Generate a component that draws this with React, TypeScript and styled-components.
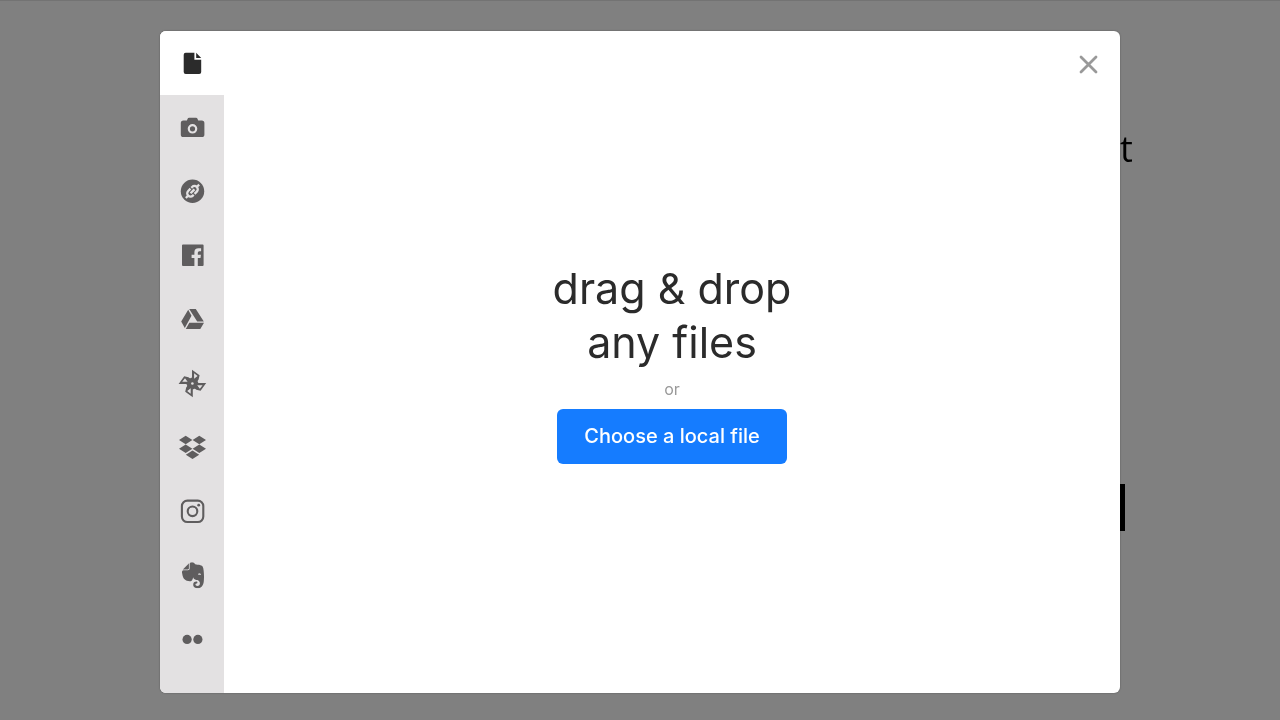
import React from "react";
import styled, { createGlobalStyle } from "styled-components";
import { SiEvernote } from "react-icons/si";

const GlobalStyle = createGlobalStyle`
  * { box-sizing: border-box; }
  html, body, #root { height: 100%; }
  body {
    margin: 0;
    background: #808080;
    color: #000;
    font-family: Inter, "Liberation Sans", sans-serif;
  }
`;

const Page = styled.div`
  position: relative;
  min-height: 100%;
  border-top: 1px solid #737373;
`;

const Backdrop = styled.div`
  display: flex;
  flex-direction: column;
  align-items: flex-end;
  gap: 311px;
  padding: 124px 147px 0 0;
`;

const BackdropText = styled.p`
  margin: 0;
  font: 400 36px/48px "Open Sans", sans-serif;
  will-change: transform;
`;

const BackdropBlock = styled.div`
  width: 48px;
  height: 47px;
  margin-right: 8px;
  background: #000;
`;

const Overlay = styled.div`
  position: fixed;
  inset: 0;
  display: flex;
  padding: 31px 160px 27px;
`;

const Dialog = styled.div`
  flex: 1;
  display: flex;
  position: relative;
  overflow: hidden;
  border-radius: 6px;
  background: #fff;
  box-shadow: 0 0 2px rgba(0, 0, 0, 0.35);
`;

const Sources = styled.nav`
  display: flex;
  flex-direction: column;
  width: 64px;
  background: #e3e1e2;
`;

const SourceButton = styled.button<{ $active?: boolean }>`
  display: flex;
  align-items: center;
  justify-content: center;
  height: 64px;
  padding: 0;
  border: 0;
  background: ${(p) => (p.$active ? "#fff" : "transparent")};
  color: ${(p) => (p.$active ? "#2b2b2b" : "#5f5d5e")};
  cursor: pointer;
`;

const Icon = styled.svg`
  width: 32px;
  height: 32px;
  fill: currentColor;
`;

const CloseButton = styled.button`
  position: absolute;
  top: 0;
  right: 0;
  display: flex;
  align-items: center;
  justify-content: center;
  width: 64px;
  height: 66px;
  padding: 0;
  border: 0;
  background: none;
  color: #999;
  cursor: pointer;
`;

const Panel = styled.main`
  flex: 1;
  display: flex;
  flex-direction: column;
  align-items: center;
  justify-content: center;
`;

const Title = styled.h1`
  margin: 0;
  color: #2b2b2b;
  font-size: 43px;
  font-weight: 400;
  line-height: 54px;
  text-align: center;
`;

const Or = styled.p`
  margin: 8px 0;
  color: #999;
  font-size: 16px;
  line-height: 24px;
`;

const ChooseButton = styled.button`
  height: 55px;
  padding: 0 27px;
  border: 0;
  border-radius: 6px;
  background: #157cff;
  color: #fff;
  font: 500 20px/28px Inter, "Liberation Sans", sans-serif;
  cursor: pointer;
`;

const LIGHT = "#e3e1e2";
const SOURCE_BOX = "-1 0 32 32";

const diamond = (x: number, y: number) =>
  `M${x - 6.7} ${y}L${x} ${y - 4.3}L${x + 6.7} ${y}L${x} ${y + 4.3}Z`;

const sources: { label: string; icon: React.ReactNode }[] = [
  {
    label: "Local files",
    icon: (
      <Icon viewBox={SOURCE_BOX}>
        <path d="M8.7 5.7H17.4V12.7H24.2V25Q24.2 27 22.2 27H8.7Q6.7 27 6.7 25V7.7Q6.7 5.7 8.7 5.7Z" />
        <path d="M19.2 5.7L24.2 11H19.2Z" />
      </Icon>
    ),
  },
  {
    label: "Camera",
    icon: (
      <Icon viewBox={SOURCE_BOX}>
        <path d="M12.3 6.8H18.8Q20.3 6.8 20.7 8.2L21.2 9.6H24.8Q27.4 9.6 27.4 12.2V23.4Q27.4 26 24.8 26H6.4Q3.8 26 3.8 23.4V12.2Q3.8 9.6 6.4 9.6H9.9L10.4 8.2Q10.8 6.8 12.3 6.8Z" />
        <circle cx="15.5" cy="17.8" r="3.7" fill="none" stroke={LIGHT} strokeWidth="2.2" />
      </Icon>
    ),
  },
  {
    label: "Direct link",
    icon: (
      <Icon viewBox={SOURCE_BOX}>
        <circle cx="15.5" cy="16.3" r="11.7" />
        <g transform="translate(15.5 16.3) rotate(-45)" fill="none" stroke={LIGHT} strokeWidth="2.3">
          <path d="M.4 -3.3H-2.8A3.3 3.3 0 0 0 -2.8 3.3H-1.6M-.4 3.3H2.8A3.3 3.3 0 0 0 2.8 -3.3H1.6" />
          <path d="M-9.4 0H-6M6 0H9.4M-2.8 0H2.8" />
        </g>
      </Icon>
    ),
  },
  {
    label: "Facebook",
    icon: (
      <Icon viewBox={SOURCE_BOX}>
        <path d="M6 5.6H25.6Q26.6 5.6 26.6 6.6V26Q26.6 27 25.6 27H20.8V18.9H23.5L23.9 15.7H20.8V13.7Q20.8 12.2 22.3 12.2H24.1V9.2H21.5Q17.4 9.2 17.4 13.2V15.7H14.6V18.9H17.4V27H6Q5 27 5 26V6.6Q5 5.6 6 5.6Z" />
      </Icon>
    ),
  },
  {
    label: "Google Drive",
    icon: (
      <Icon viewBox={SOURCE_BOX}>
        <path d="M11.2 6.8L14.5 12.8L7.8 25L4.2 18.6ZM12.2 6H18.8L26.8 18.6H20.2ZM12.3 19.8H27L23.3 26H8.8Z" />
      </Icon>
    ),
  },
  {
    label: "Google Photos",
    icon: (
      <Icon viewBox={SOURCE_BOX}>
        {[0, 90, 180, 270].map((angle) => (
          <path
            key={angle}
            transform={`translate(15.4 16.5) rotate(${angle})`}
            fillRule="evenodd"
            d="M-4.5 -4L-.4 -6V-13.8L7.2 -8.2L6.2 -4L2 2ZM1.7 -10.2V-4.8L5.2 -7.4Z"
          />
        ))}
        <circle cx="15.4" cy="16.5" r="1.3" fill={LIGHT} />
      </Icon>
    ),
  },
  {
    label: "Dropbox",
    icon: (
      <Icon viewBox={SOURCE_BOX}>
        <path
          d={[
            diamond(8.7, 9),
            diamond(22.3, 9),
            diamond(8.7, 17.7),
            diamond(22.3, 17.7),
            diamond(15.5, 23.8),
          ].join("")}
        />
      </Icon>
    ),
  },
  {
    label: "Instagram",
    icon: (
      <Icon viewBox={SOURCE_BOX}>
        <g fill="none" stroke="currentColor" strokeWidth="2.1">
          <rect x="4.9" y="5.6" width="21.4" height="21.4" rx="5.5" />
          <circle cx="15.5" cy="16.3" r="4.8" />
        </g>
        <circle cx="21.7" cy="10.2" r="1.4" />
      </Icon>
    ),
  },
  {
    label: "Evernote",
    icon: (
      <Icon viewBox={SOURCE_BOX}>
        <SiEvernote x="3" y="3.3" size={26} />
      </Icon>
    ),
  },
  {
    label: "Flickr",
    icon: (
      <Icon viewBox={SOURCE_BOX}>
        <circle cx="10.1" cy="16.4" r="4.6" />
        <circle cx="20.9" cy="16.4" r="4.6" />
      </Icon>
    ),
  },
];

export default function App() {
  return (
    <Page>
      <GlobalStyle />
      <Backdrop aria-hidden="true">
        <BackdropText>t</BackdropText>
        <BackdropBlock />
      </Backdrop>
      <Overlay>
        <Dialog role="dialog" aria-modal="true" aria-label="Upload files">
          <Sources aria-label="File sources">
            {sources.map(({ label, icon }, index) => (
              <SourceButton key={label} type="button" aria-label={label} $active={index === 0}>
                {icon}
              </SourceButton>
            ))}
          </Sources>
          <Panel>
            <Title>
              drag &amp; drop
              <br />
              any files
            </Title>
            <Or>or</Or>
            <ChooseButton type="button">Choose a local file</ChooseButton>
          </Panel>
          <CloseButton type="button" aria-label="Close">
            <Icon viewBox="0 0 32 32">
              <path
                d="M9 9L24 24M24 9L9 24"
                fill="none"
                stroke="currentColor"
                strokeWidth="2.8"
                strokeLinecap="round"
              />
            </Icon>
          </CloseButton>
        </Dialog>
      </Overlay>
    </Page>
  );
}
